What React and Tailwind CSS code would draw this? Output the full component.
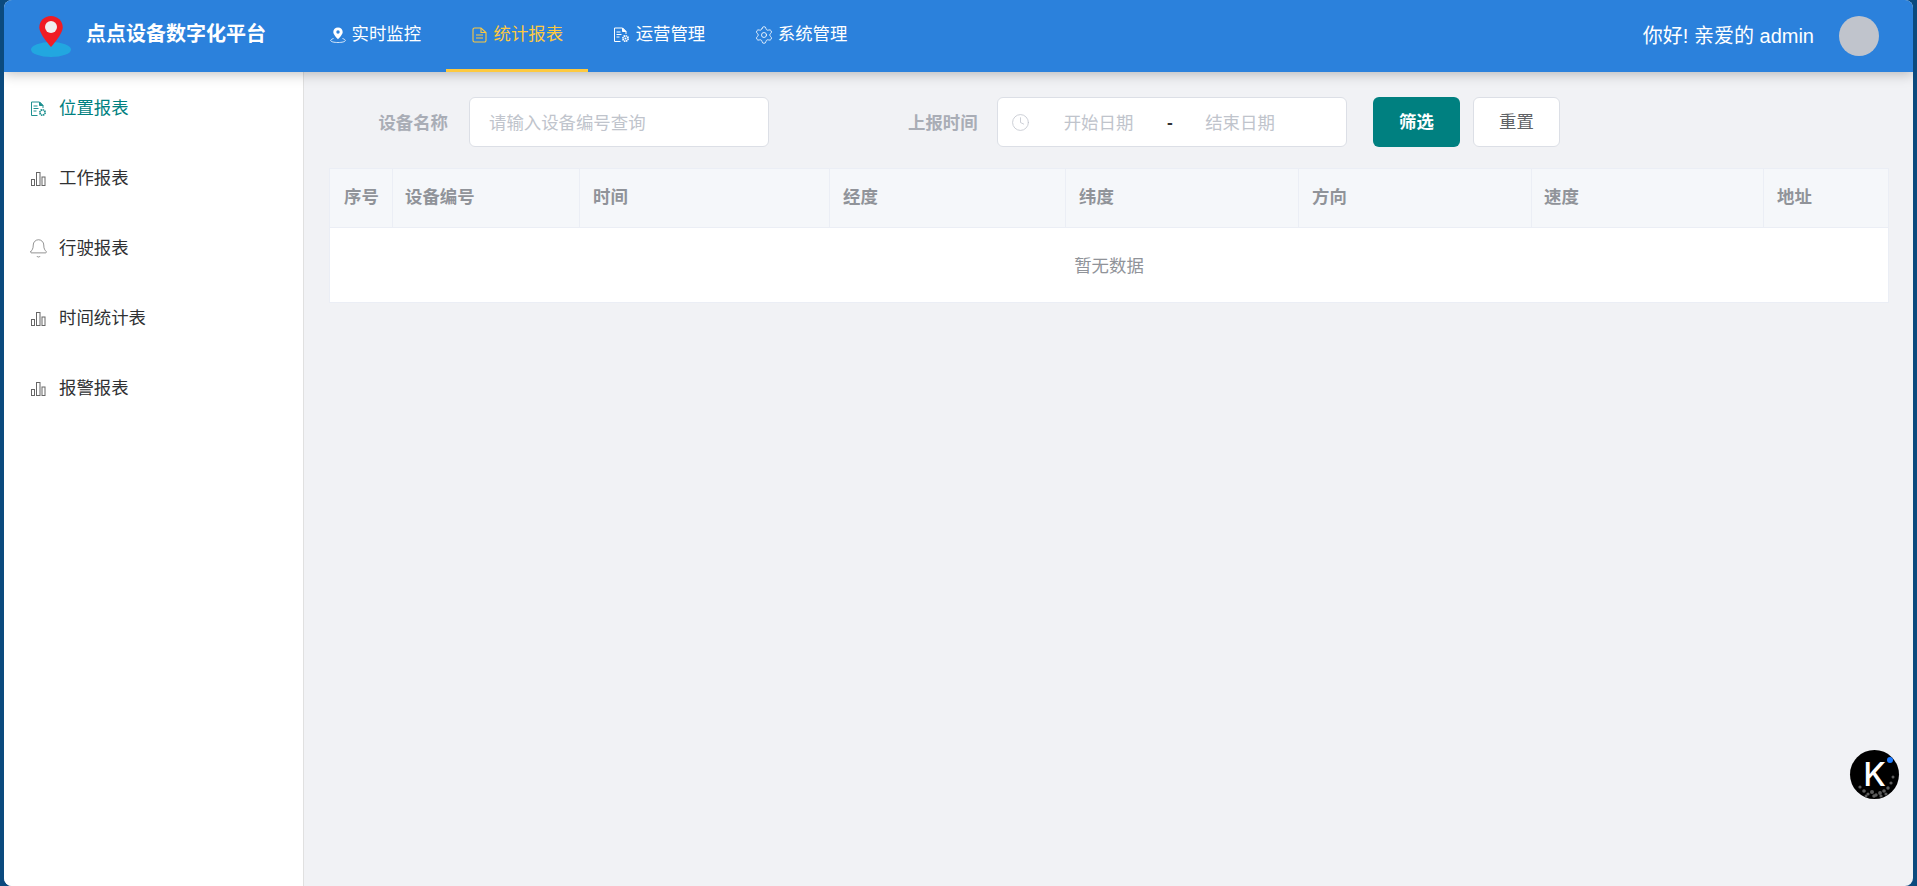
import React from "react";
import { Bell, Clock, Settings } from "lucide-react";

const font = { fontFamily: '"Liberation Sans","Noto Sans CJK SC",sans-serif' };

function DocGear({ color = "currentColor" }) {
  return (
    <svg width="17" height="16" viewBox="0 0 17 16" fill="none" stroke={color} strokeWidth="1">
      <path d="M7.5 14.5H1.5V1h8l3.500 3.500V7" />
      <path d="M9.500 1v3.500H13z" fill={color} />
      <path d="M3.500 5h4M3.500 7.500h5M3.500 10h3" />
      <circle cx="12.500" cy="11.500" r="2.600" strokeWidth="1.800" strokeDasharray="1.400 0.600" />
      <circle cx="12.500" cy="11.500" r="1" fill="#fff" stroke="none" />
    </svg>
  );
}

function Bars() {
  return (
    <svg width="15" height="14" viewBox="0 0 15 14" fill="none" stroke="#666" strokeWidth="1">
      <rect x="0.500" y="7.500" width="3" height="6" />
      <rect x="5.500" y="0.500" width="3.500" height="13" />
      <rect x="11" y="5" width="3" height="8.500" />
    </svg>
  );
}

function PinSmall() {
  return (
    <svg width="16" height="16" viewBox="0 0 16 16" fill="none">
      <path d="M8 0.500c-2.800 0-4.700 2-4.700 4.600C3.300 8 8 12.400 8 12.400s4.700-4.400 4.700-7.300C12.700 2.500 10.800.5 8 .5z" fill="#fff" />
      <circle cx="8" cy="5" r="1.700" fill="#2b81dc" />
      <path d="M3.500 11.500C1.600 12.100.7 12.800.7 13.600c0 1.100 3.300 1.900 7.300 1.900s7.300-.8 7.300-1.900c0-.8-.9-1.500-2.800-2.100" stroke="#fff" strokeWidth=".8" />
    </svg>
  );
}

function DocLines({ color }) {
  return (
    <svg width="15" height="16" viewBox="0 0 15 16" fill="none" stroke={color} strokeWidth="1.100">
      <path d="M2.500 1h6.500l5 4.500V13.500a1.500 1.500 0 0 1-1.500 1.500h-10A1.500 1.500 0 0 1 1 13.500v-11A1.500 1.500 0 0 1 2.500 1z" />
      <path d="M4 8h7M4 11h7M9 1v4.500h5" />
    </svg>
  );
}

function Grain() {
  const dots = [
    [14, 41, 1.2], [18, 44, 1], [22, 42, 1.4], [26, 45, 1.1], [30, 43, 1.3], [34, 41, 1.2],
    [38, 38, 1.1], [41, 33, 1], [43, 27, 0.9], [10, 37, 1], [24, 46, 1.2], [31, 46, 1], [36, 44, 1], [16, 46, 0.9],
  ];
  return (
    <svg className="absolute inset-0" width="49" height="49" viewBox="0 0 49 49">
      {dots.map(([x, y, r]) => (
        <circle key={`${x}-${y}`} cx={x} cy={y} r={r + 0.6} fill="#5c5c5c" />
      ))}
    </svg>
  );
}

function NavItem({ icon, label, active }) {
  return (
    <div className={`flex h-[72px] items-center gap-[5.5px] border-b-[3px] px-[25px] ${active ? "border-[#fdc93f] text-[#fdc93f]" : "border-transparent text-white"}`}>
      <span className="flex w-[17px] justify-center">{icon}</span>
      <span>{label}</span>
    </div>
  );
}

function SideItem({ icon, label, active }) {
  return (
    <div className={`flex h-[70px] items-center pl-[25px] pt-[3px] ${active ? "text-[#008080]" : "text-[#303133]"}`}>
      <span className="flex w-[18px] justify-center">{icon}</span>
      <span className="ml-[12px]">{label}</span>
    </div>
  );
}

const cols = [
  ["序号", "w-[63px] pl-[14px]"],
  ["设备编号", "w-[187px] pl-[12px]"],
  ["时间", "w-[250px] pl-[13px]"],
  ["经度", "w-[236px] pl-[13px]"],
  ["纬度", "w-[233px] pl-[13px]"],
  ["方向", "w-[233px] pl-[13px]"],
  ["速度", "w-[232px] pl-[12px]"],
  ["地址", "w-[125px] pl-[13px]"],
];

export default function App() {
  return (
    <div className="h-screen w-full overflow-hidden bg-[#0b4a7e] px-[4px] text-[17.4px]" style={font}>
      <div className="flex h-full flex-col overflow-hidden rounded-[8px] bg-[#f1f2f5]">
        <header className="relative z-10 flex h-[72px] shrink-0 items-center bg-[#2b81dc] shadow-[0_2px_12px_rgba(0,0,0,0.25)]">
          <div className="flex w-[300px] shrink-0 items-center pl-[27px]">
            <svg width="40" height="41" viewBox="0 0 40 41">
              <ellipse cx="20" cy="33.500" rx="20" ry="7.500" fill="#22a7e0" />
              <path d="M20 0C13.300 0 8.300 5 8.300 11.300 8.300 18.500 20 31 20 31S31.700 18.500 31.700 11.300C31.700 5 26.700 0 20 0z" fill="#f01c24" />
              <circle cx="20" cy="11" r="6" fill="#f0f0f0" />
            </svg>
            <span className="ml-[15px] pb-[5px] text-[20px] font-bold text-white">点点设备数字化平台</span>
          </div>
          <nav className="flex">
            <NavItem icon={<PinSmall />} label="实时监控" />
            <NavItem icon={<DocLines color="#fdc93f" />} label="统计报表" active />
            <NavItem icon={<DocGear color="#fff" />} label="运营管理" />
            <NavItem icon={<Settings size={20} strokeWidth={1} color="#fff" className="shrink-0" />} label="系统管理" />
          </nav>
          <div className="ml-auto flex items-center pr-[34px]">
            <span className="text-[20px] text-white">你好! 亲爱的 admin</span>
            <span className="ml-[25px] h-[40px] w-[40px] rounded-full bg-[#c0c4cc]" />
          </div>
        </header>
        <div className="flex min-h-0 flex-1">
          <aside className="w-[300px] shrink-0 border-r border-[#e0e0e0] bg-white">
            <SideItem icon={<DocGear color="#1e9090" />} label="位置报表" active />
            <SideItem icon={<Bars />} label="工作报表" />
            <SideItem icon={<Bell size={21} strokeWidth={0.8} color="#666" className="shrink-0" />} label="行驶报表" />
            <SideItem icon={<Bars />} label="时间统计表" />
            <SideItem icon={<Bars />} label="报警报表" />
          </aside>
          <main className="relative flex-1 pl-[25px] pr-[24px] pt-[25px]">
            <div className="flex h-[50px] items-stretch">
              <label className="flex w-[119px] items-center justify-end pt-[2px] font-bold text-[#a9adb6]">设备名称</label>
              <div className="ml-[21px] flex w-[300px] items-center rounded-[6px] border border-[#dcdfe6] bg-white pl-[19px] pt-[2px] text-[#c0c4cc]">请输入设备编号查询</div>
              <label className="ml-[139px] flex w-[69px] items-center whitespace-nowrap pt-[2px] font-bold text-[#a9adb6]">上报时间</label>
              <div className="ml-[20px] flex w-[350px] items-center rounded-[6px] border border-[#dcdfe6] bg-white pl-[13px]">
                <Clock size={19} strokeWidth={1} color="#c0c4cc" className="shrink-0" />
                <span className="w-[137px] pt-[2px] text-center text-[#c0c4cc]">开始日期</span>
                <span className="w-[6px] pt-[2px] text-center font-bold leading-none text-[#303133]">-</span>
                <span className="w-[134px] pt-[2px] text-center text-[#c0c4cc]">结束日期</span>
              </div>
              <button className="ml-[26px] w-[87px] rounded-[6px] bg-[#008080] font-bold text-white">筛选</button>
              <button className="ml-[13px] w-[87px] rounded-[6px] border border-[#dcdfe6] bg-white text-[#606266]">重置</button>
            </div>
            <table className="mt-[21px] w-[1559px] table-fixed border-collapse border border-[#ebeef5] bg-white">
              <thead>
                <tr className="h-[59px] bg-[#f5f7fa]">
                  {cols.map(([t, w]) => (
                    <th key={t} className={`${w} border border-[#ebeef5] pb-[2px] text-left font-bold text-[#909399]`}>{t}</th>
                  ))}
                </tr>
              </thead>
              <tbody>
                <tr className="h-[75px]">
                  <td colSpan={8} className="pt-[3px] text-center text-[#909399]">暂无数据</td>
                </tr>
              </tbody>
            </table>
            <div className="absolute left-[1546px] top-[678px] flex h-[49px] w-[49px] items-center justify-center overflow-hidden rounded-full bg-black">
              <Grain />
              <span className="relative text-[33px] font-medium leading-none text-white" style={{ fontFamily: "Inter, sans-serif" }}>K</span>
              <span className="absolute right-[6px] top-[7px] h-[6px] w-[6px] rounded-full bg-[#1e7bff]" />
            </div>
          </main>
        </div>
      </div>
    </div>
  );
}
